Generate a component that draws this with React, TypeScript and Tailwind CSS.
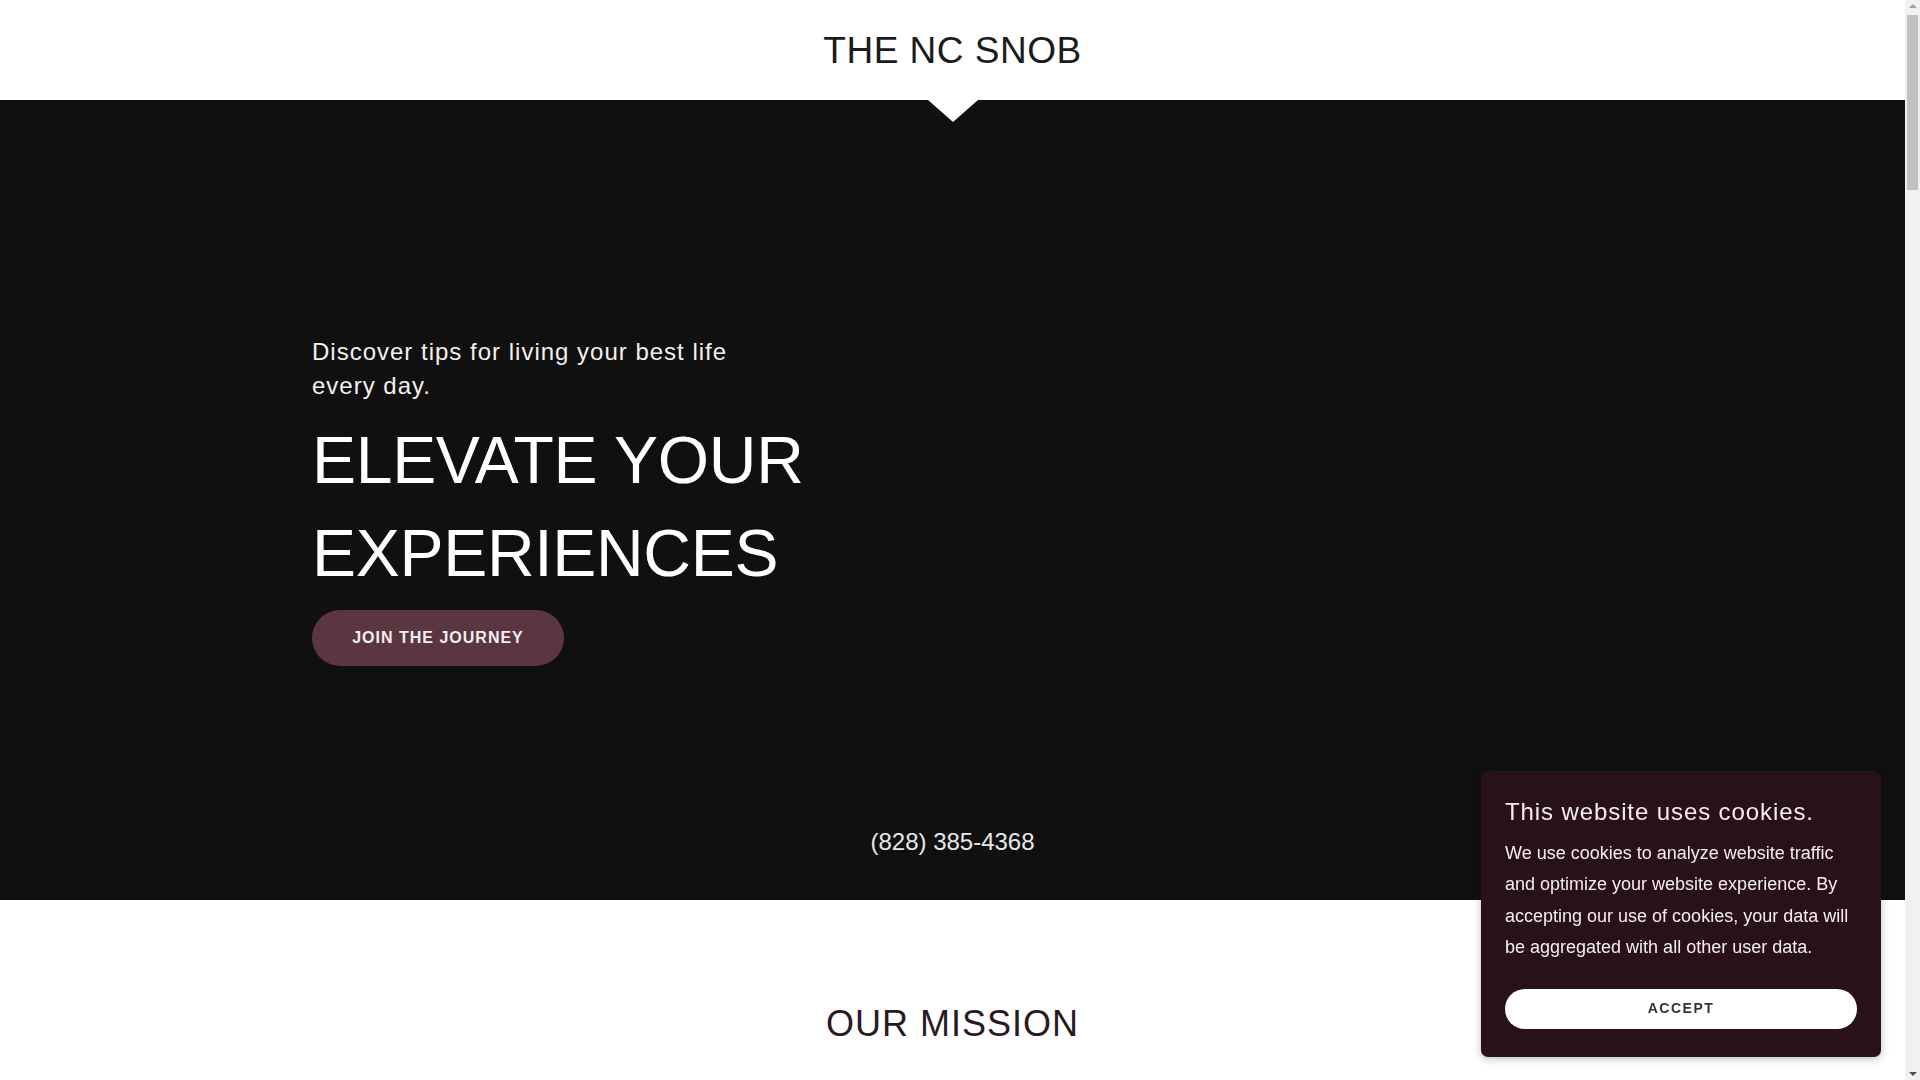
const font = "font-['Liberation_Sans',Arial,sans-serif]";

function Header() {
  return (
    <header className="relative z-10 h-[100px] bg-white flex items-center justify-center">
      <h1 className="text-[37px] leading-none text-[#1b1b1b] tracking-[0.5px]">THE NC SNOB</h1>
      <div className="absolute left-1/2 top-full -translate-x-1/2 w-0 h-0 border-l-[25px] border-r-[25px] border-t-[22px] border-l-transparent border-r-transparent border-t-white" />
    </header>
  );
}

function Hero() {
  return (
    <section className="h-[800px] bg-[#101010] pt-[235px]">
      <div className="pl-[312px]">
        <p className="w-[480px] text-[24px] leading-[34px] tracking-[1px] text-[#f4f0f1]">
          Discover tips for living your best life every day.
        </p>
        <h2 className="mt-[11px] text-[66px] leading-[93px] tracking-[-0.3px] text-white">
          ELEVATE YOUR
          <br />
          EXPERIENCES
        </h2>
        <button className="mt-[10px] h-[56px] w-[252px] rounded-full bg-[#5b3540] text-[16px] font-bold tracking-[1px] text-[#f4eef0]">
          JOIN THE JOURNEY
        </button>
      </div>
      <div className="mt-[164px] text-center text-[24px] leading-none text-[#e8e8e8]">(828) 385-4368</div>
    </section>
  );
}

function CookieBanner() {
  return (
    <div className="fixed left-[1481px] top-[771px] w-[400px] rounded-[7px] bg-[#28111a] px-[24px] pt-[26px] pb-[28px] shadow-[0_2px_8px_rgba(0,0,0,0.25)]">
      <h3 className="text-[24px] leading-[30px] tracking-[0.9px] text-[#f4eef0]">This website uses cookies.</h3>
      <p className="mt-[11px] text-[18px] leading-[31.4px] text-[#f4eef0]">
        We use cookies to analyze website traffic and optimize your website experience. By accepting our use of cookies, your data will be aggregated with all other user data.
      </p>
      <button className="mt-[25px] h-[40px] w-full rounded-full bg-white text-[14px] font-bold tracking-[1.5px] text-[#333333]">
        ACCEPT
      </button>
    </div>
  );
}

function Scrollbar() {
  return (
    <aside className="w-[15px] h-full bg-[#f1f1f1] flex flex-col items-center">
      <div className="mt-[4px] w-0 h-0 border-l-[4px] border-r-[4px] border-b-[4px] border-l-transparent border-r-transparent border-b-[#a3a3a3]" />
      <div className="mt-[7px] w-[11px] h-[175px] bg-[#c1c1c1]" />
      <div className="flex-1" />
      <div className="mb-[4px] w-0 h-0 border-l-[4px] border-r-[4px] border-t-[4px] border-l-transparent border-r-transparent border-t-[#505050]" />
    </aside>
  );
}

export default function App() {
  return (
    <div className={`${font} h-[1080px] overflow-hidden bg-white flex`}>
      <main className="w-[1905px]">
        <Header />
        <Hero />
        <section className="pt-[106px]">
          <h2 className="text-center text-[36px] leading-none tracking-[1px] text-[#2a1a1f]">OUR MISSION</h2>
        </section>
      </main>
      <Scrollbar />
      <CookieBanner />
    </div>
  );
}
